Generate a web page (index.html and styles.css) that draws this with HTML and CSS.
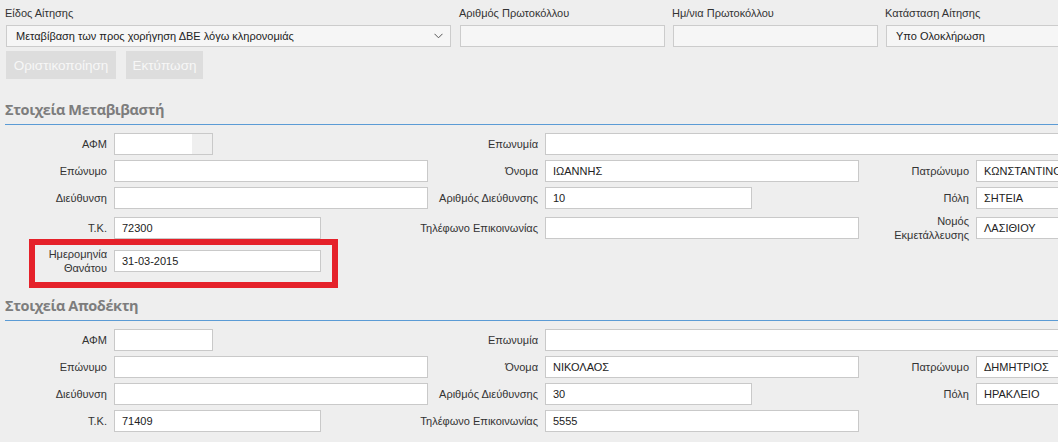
FILE: index.html
```html
<!DOCTYPE html>
<html lang="el">
<head>
<meta charset="utf-8">
<title>Αίτηση</title>
<link rel="stylesheet" href="styles.css">
</head>
<body>
<div class="page">
  <div class="top">
    <div class="field f-type">
      <div class="flabel">Είδος Αίτησης</div>
      <div class="select">
        <span>Μεταβίβαση των προς χορήγηση ΔΒΕ λόγω κληρονομιάς</span>
        <svg class="chev" width="9" height="6" viewBox="0 0 9 6"><polyline points="0.5,0.8 4.5,4.8 8.5,0.8" fill="none" stroke="#555" stroke-width="1"/></svg>
      </div>
    </div>
    <div class="field f-proto">
      <div class="flabel">Αριθμός Πρωτοκόλλου</div>
      <div class="box"></div>
    </div>
    <div class="field f-date">
      <div class="flabel">Ημ/νια Πρωτοκόλλου</div>
      <div class="box"></div>
    </div>
    <div class="field f-state">
      <div class="flabel">Κατάσταση Αίτησης</div>
      <div class="box">Υπο Ολοκλήρωση</div>
    </div>
  </div>
  <div class="actions">
    <button class="btn btn-final">Οριστικοποίηση</button>
    <button class="btn btn-print">Εκτύπωση</button>
  </div>

  <section class="sec">
    <h2 class="sec-title">Στοιχεία Μεταβιβαστή</h2>
    <div class="grid">
      <div class="lbl c1">ΑΦΜ</div>
      <div class="in w99 gray c2"><span class="redact"></span></div>
      <div class="lbl c3">Επωνυμία</div>
      <div class="in span c4"></div>

      <div class="lbl c1">Επώνυμο</div>
      <div class="in c2"></div>
      <div class="lbl c3">Όνομα</div>
      <div class="in c4">ΙΩΑΝΝΗΣ</div>
      <div class="lbl c5">Πατρώνυμο</div>
      <div class="in c6">ΚΩΝΣΤΑΝΤΙΝΟΣ</div>

      <div class="lbl c1">Διεύθυνση</div>
      <div class="in c2"></div>
      <div class="lbl c3">Αριθμός Διεύθυνσης</div>
      <div class="in w207 c4">10</div>
      <div class="lbl c5">Πόλη</div>
      <div class="in c6">ΣΗΤΕΙΑ</div>

      <div class="lbl c1">Τ.Κ.</div>
      <div class="in w207 c2">72300</div>
      <div class="lbl c3">Τηλέφωνο Επικοινωνίας</div>
      <div class="in c4"></div>
      <div class="lbl two c5"><span>Νομός<br>Εκμετάλλευσης</span></div>
      <div class="in c6">ΛΑΣΙΘΙΟΥ</div>

      <div class="lbl two c1"><span>Ημερομηνία<br>Θανάτου</span></div>
      <div class="in w207 c2">31-03-2015</div>

      <div class="mark"></div>
    </div>
  </section>

  <section class="sec">
    <h2 class="sec-title">Στοιχεία Αποδέκτη</h2>
    <div class="grid">
      <div class="lbl c1">ΑΦΜ</div>
      <div class="in w99 c2"></div>
      <div class="lbl c3">Επωνυμία</div>
      <div class="in span c4"></div>

      <div class="lbl c1">Επώνυμο</div>
      <div class="in c2"></div>
      <div class="lbl c3">Όνομα</div>
      <div class="in c4">ΝΙΚΟΛΑΟΣ</div>
      <div class="lbl c5">Πατρώνυμο</div>
      <div class="in c6">ΔΗΜΗΤΡΙΟΣ</div>

      <div class="lbl c1">Διεύθυνση</div>
      <div class="in c2"></div>
      <div class="lbl c3">Αριθμός Διεύθυνσης</div>
      <div class="in w207 c4">30</div>
      <div class="lbl c5">Πόλη</div>
      <div class="in c6">ΗΡΑΚΛΕΙΟ</div>

      <div class="lbl c1">Τ.Κ.</div>
      <div class="in w207 c2">71409</div>
      <div class="lbl c3">Τηλέφωνο Επικοινωνίας</div>
      <div class="in c4">5555</div>
    </div>
  </section>
</div>
</body>
</html>
```

FILE: styles.css
```css
html, body {
  margin: 0;
  padding: 0;
}
body {
  background: #eeeeee;
  font-family: "Liberation Sans", Arial, sans-serif;
  font-size: 11px;
  color: #333333;
  width: 1058px;
  height: 442px;
  overflow: hidden;
}
.page {
  padding-left: 5px;
  width: 1320px;
}

/* top row */
.top {
  display: flex;
  padding-top: 7px;
  padding-left: 1px;
}
.field {
  display: flex;
  flex-direction: column;
}
.flabel {
  line-height: 13px;
  height: 13px;
  margin-bottom: 5px;
  color: #333;
  margin-left: -1px;
  white-space: nowrap;
}
.f-type { width: 445px; }
.f-proto { width: 205px; margin-left: 9px; }
.f-date { width: 205px; margin-left: 8px; }
.f-state { width: 205px; margin-left: 8px; }

.select, .box {
  box-sizing: border-box;
  height: 22px;
  border: 1px solid #cccccc;
  background: #f6f6f6;
  line-height: 20px;
  padding: 0 7px 0 9px;
  color: #222;
  white-space: nowrap;
}
.select {
  display: flex;
  align-items: center;
  justify-content: space-between;
}
.chev { display: block; }

.actions {
  display: flex;
  gap: 10px;
  margin-top: 4px;
  padding-left: 1px;
}
.btn {
  height: 28px;
  border: none;
  background: #dddddd;
  color: #f7f7f7;
  font-family: "Liberation Sans", Arial, sans-serif;
  font-size: 13.5px;
  padding: 0;
  margin: 0;
}
.btn-final { width: 110px; }
.btn-print { width: 77px; }

/* sections */
.sec {
  padding-top: 21px;
}
.sec-title {
  margin: 0;
  font-family: "Open Sans", "Noto Sans", sans-serif;
  font-weight: 700;
  font-size: 14.5px;
  letter-spacing: -0.4px;
  line-height: 20px;
  color: #7d7d7d;
  padding-bottom: 4px;
  border-bottom: 1px solid #5b9bd5;
  padding-left: 0;
}
.grid {
  position: relative;
  display: grid;
  grid-template-columns: 109px 314px 117px 314px 117px 314px;
  row-gap: 5px;
  align-items: center;
  margin-top: 8px;
}
.lbl {
  display: flex;
  justify-content: flex-end;
  text-align: right;
  padding-right: 7px;
  line-height: 14px;
  color: #333;
  white-space: nowrap;
  min-width: 0;
}
.c1 { grid-column: 1; }
.c2 { grid-column: 2; }
.c3 { grid-column: 3; }
.c4 { grid-column: 4; }
.c5 { grid-column: 5; }
.c6 { grid-column: 6; }
.span { grid-column: 4 / 7; }

.in {
  box-sizing: border-box;
  height: 22px;
  border: 1px solid #c9c9c9;
  background: #ffffff;
  padding: 0 7px;
  line-height: 20px;
  color: #222;
  white-space: nowrap;
  overflow: hidden;
}
.w99 { width: 99px; }
.w207 { width: 207px; }
.gray {
  background: #efefef;
  padding: 0;
}
.redact {
  display: block;
  width: 77px;
  height: 100%;
  background: #ffffff;
}

.mark {
  position: absolute;
  left: 24px;
  top: 106px;
  width: 309px;
  height: 49px;
  box-sizing: border-box;
  border: 6px solid #e5212a;
  pointer-events: none;
}
```
